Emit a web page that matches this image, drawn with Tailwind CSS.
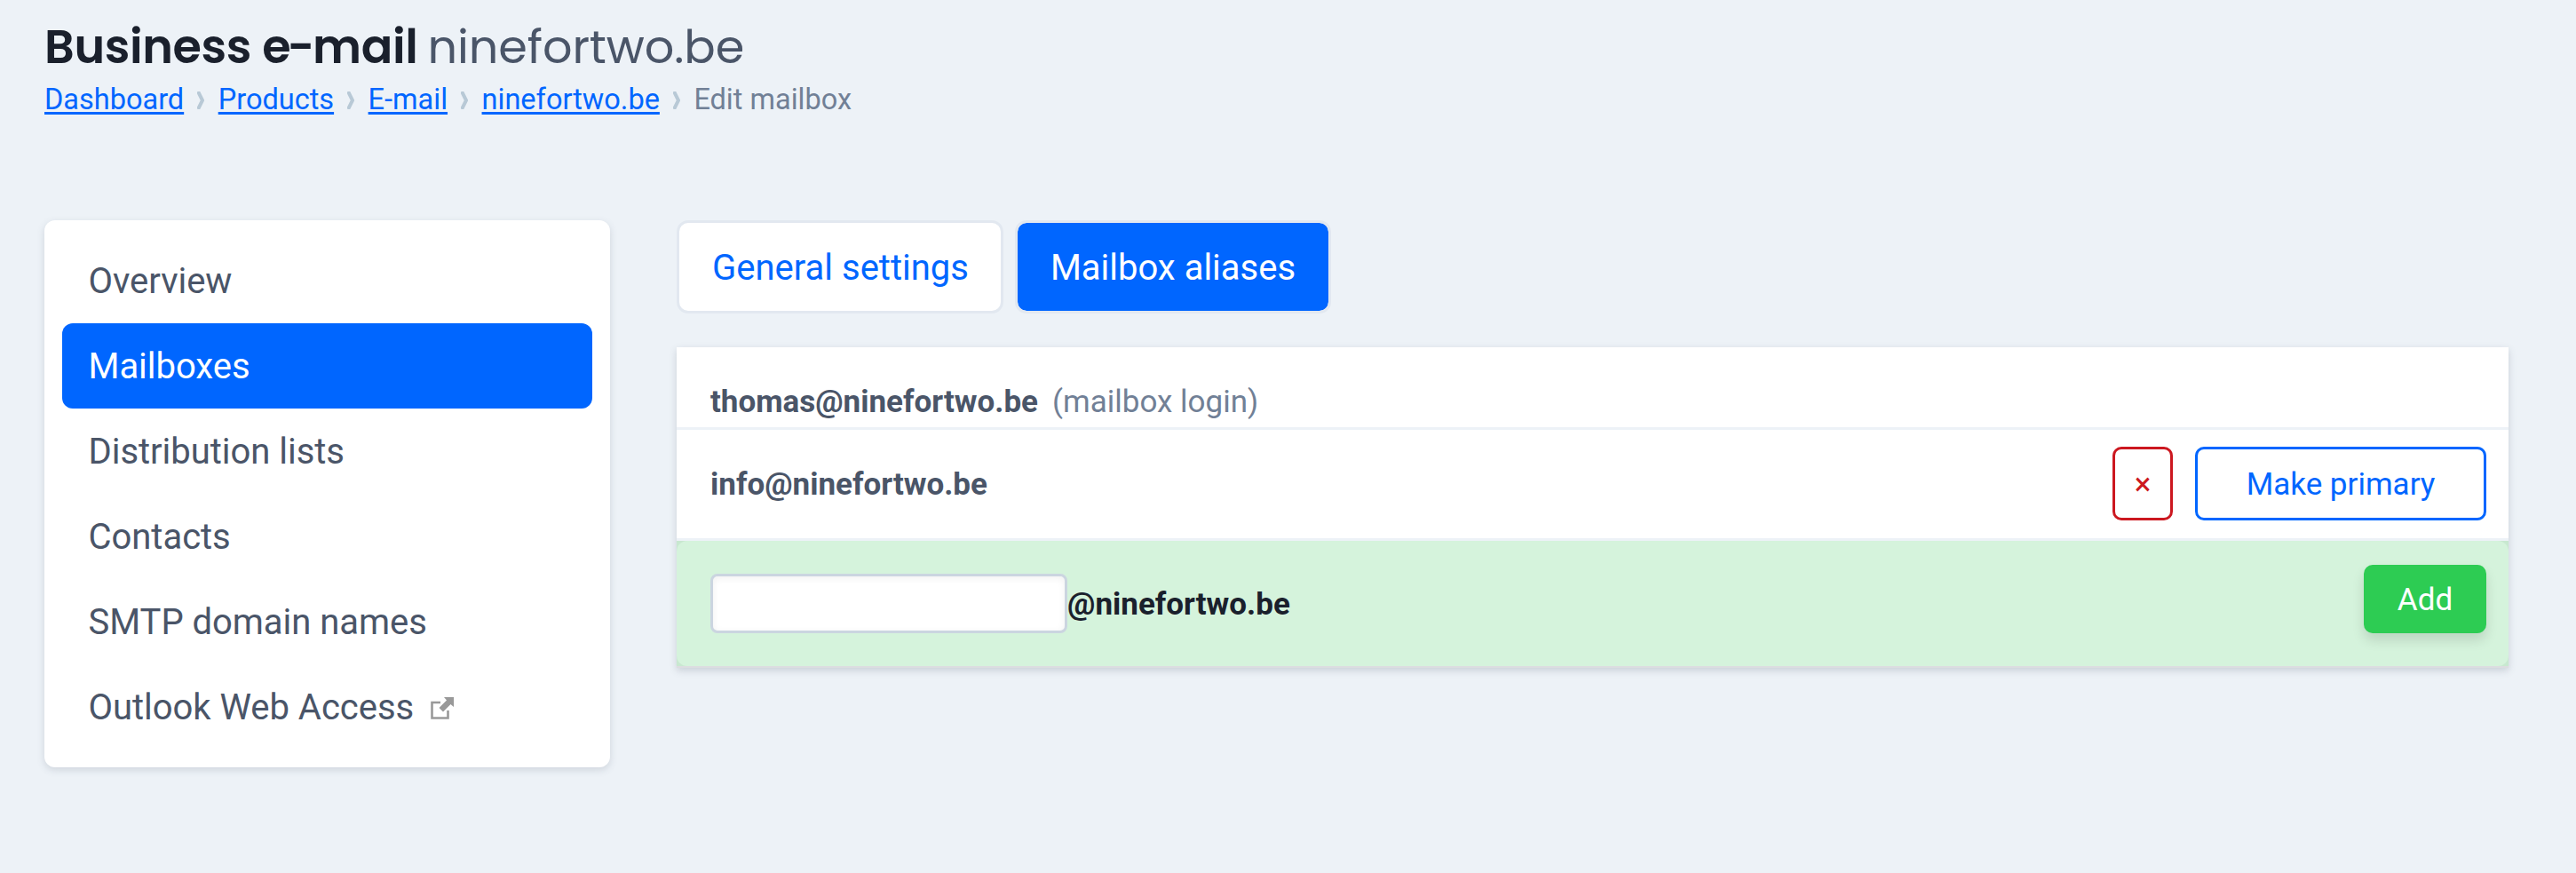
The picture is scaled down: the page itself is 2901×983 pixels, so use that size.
<!DOCTYPE html>
<html lang="en">
<head>
  <meta charset="UTF-8">
  <meta name="viewport" content="width=device-width, initial-scale=1.0">
  <title>Business e-mail - Edit mailbox</title>
  <script src="https://cdn.jsdelivr.net/npm/@tailwindcss/browser@4"></script>
</head>
<body class="bg-[#edf2f7] font-[Roboto,sans-serif] text-[#4a5568]">
  <div class="min-h-[983px] pl-[50px] pr-[76px] pt-[14px]">
    <header class="h-[234px]">
      <h1 class="font-[Poppins,Inter,sans-serif] pt-px text-[52.5px] leading-[75px] whitespace-nowrap">
        <span class="font-semibold tracking-[-0.36px] text-[#1a202c]">Business e<span class="-ml-[3.5px] -mr-[2px]">-</span>mail</span>
        <span class="-ml-[3px] font-normal tracking-[-0.1px] text-[#4a5568]">ninefortwo.be</span>
      </h1>
      <!-- Breadcrumbs -->
      <nav class="flex items-center text-[32.5px] leading-[44px] whitespace-nowrap">
        <a href="#" class="text-[#0066ff] underline decoration-[3px] underline-offset-[3px]">Dashboard</a>
        <svg class="mt-px ml-[15px] mr-[15.5px] h-5 w-2" viewBox="0 0 8 20" fill="none" stroke="#b8c9d6" stroke-width="4"><path d="M1 0L6 10L1 20"/></svg>
        <a href="#" class="text-[#0066ff] underline decoration-[3px] underline-offset-[3px]">Products</a>
        <svg class="mt-px ml-[15px] mr-[15.5px] h-5 w-2" viewBox="0 0 8 20" fill="none" stroke="#b8c9d6" stroke-width="4"><path d="M1 0L6 10L1 20"/></svg>
        <a href="#" class="text-[#0066ff] underline decoration-[3px] underline-offset-[3px]">E-mail</a>
        <svg class="mt-px ml-[15px] mr-[15.5px] h-5 w-2" viewBox="0 0 8 20" fill="none" stroke="#b8c9d6" stroke-width="4"><path d="M1 0L6 10L1 20"/></svg>
        <a href="#" class="text-[#0066ff] underline decoration-[3px] underline-offset-[3px]">ninefortwo.be</a>
        <svg class="mt-px ml-[15px] mr-[15.5px] h-5 w-2" viewBox="0 0 8 20" fill="none" stroke="#b8c9d6" stroke-width="4"><path d="M1 0L6 10L1 20"/></svg>
        <span class="text-[#718096]">Edit mailbox</span>
      </nav>
    </header>

    <div class="flex items-start gap-[75px]">
      <!-- Sidebar -->
      <aside class="w-[637px] shrink-0 rounded-[12px] bg-white p-5 shadow-[0_3px_8px_rgba(74,85,104,0.18)]">
        <ul class="text-[40px] leading-[94px] tracking-[-0.03px]">
          <li class="px-[29.5px] pt-[2px]"><a href="#">Overview</a></li>
          <li class="rounded-[12px] bg-[#0066ff] px-[29.5px] pt-[2px] text-white"><a href="#">Mailboxes</a></li>
          <li class="px-[29.5px] pt-[2px]"><a href="#">Distribution lists</a></li>
          <li class="px-[29.5px] pt-[2px]"><a href="#">Contacts</a></li>
          <li class="px-[29.5px] pt-[2px]"><a href="#">SMTP domain names</a></li>
          <li class="px-[29.5px] pt-[2px]">
            <a href="#" class="flex items-center gap-[19px]">Outlook Web Access
              <svg class="mt-px h-[26px] w-[26px]" viewBox="0 0 26 26" fill="none">
                <path d="M11 6H1.500V23.500H19.500V15" stroke="#999" stroke-width="2.600"/>
                <path d="M15 0H26V11L22.500 8L14 16.500L9.500 12L18 3.500Z" fill="#999"/>
              </svg>
            </a>
          </li>
        </ul>
      </aside>

      <main class="min-w-0 grow">
        <!-- Tabs -->
        <div class="mb-[38px] flex gap-[13px] text-[40px] leading-[97px] whitespace-nowrap">
          <a href="#" class="w-[368px] rounded-[13px] border-[3px] border-[#e2e8f0] bg-white pt-[2px] pl-px text-center text-[#0066ff]">General settings</a>
          <a href="#" class="w-[356px] rounded-[13px] border-[3px] border-[#e2e8f0] bg-[#0066ff] bg-clip-padding pt-[2px] text-center text-white">Mailbox aliases</a>
        </div>

        <!-- Aliases -->
        <div class="bg-white text-[35px] leading-[50px] shadow-[0_3px_8px_rgba(74,85,104,0.22)]">
          <div class="flex h-[93px] items-end gap-[16px] border-b-[3px] border-[#edf2f7] pb-[3px] pl-[38px]">
            <strong class="font-bold">thomas@ninefortwo.be</strong>
            <span class="text-[#718096]">(mailbox login)</span>
          </div>
          <div class="flex h-[125px] items-start border-b-[3px] border-[#edf2f7] pl-[38px] pr-[25px] pt-[19px]">
            <strong class="mt-[18px] grow font-bold">info@ninefortwo.be</strong>
            <button class="mr-[25px] h-[83px] w-[68px] rounded-[10px] border-[3px] border-[#cc1820] pt-[2px] text-[#cc1820]">×</button>
            <button class="h-[83px] w-[328px] rounded-[10px] border-[3px] border-[#0066ff] pt-[2px] text-[#0066ff]">Make primary</button>
          </div>
          <div class="border-b-2 border-[#dcdde0] bg-[#c8e8d0]">
            <form class="flex h-[141px] items-start rounded-[12px] bg-[#d5f3dc] pl-[38px] pr-[25px] pt-[27px]">
              <input type="text" class="mt-[10px] h-[67px] w-[402px] rounded-[8px] border-[3px] border-[#cbd5e0] bg-white shadow-[inset_0_2px_8px_rgba(0,0,0,0.06)]">
              <strong class="mt-[20px] grow font-bold text-[#1a202c]">@ninefortwo.be</strong>
              <button type="button" class="h-[77px] w-[138px] rounded-[10px] bg-[#2dcc53] pt-[2px] text-white shadow-[0_8px_14px_rgba(0,0,0,0.12)]">Add</button>
            </form>
          </div>
        </div>
      </main>
    </div>
  </div>
</body>
</html>
